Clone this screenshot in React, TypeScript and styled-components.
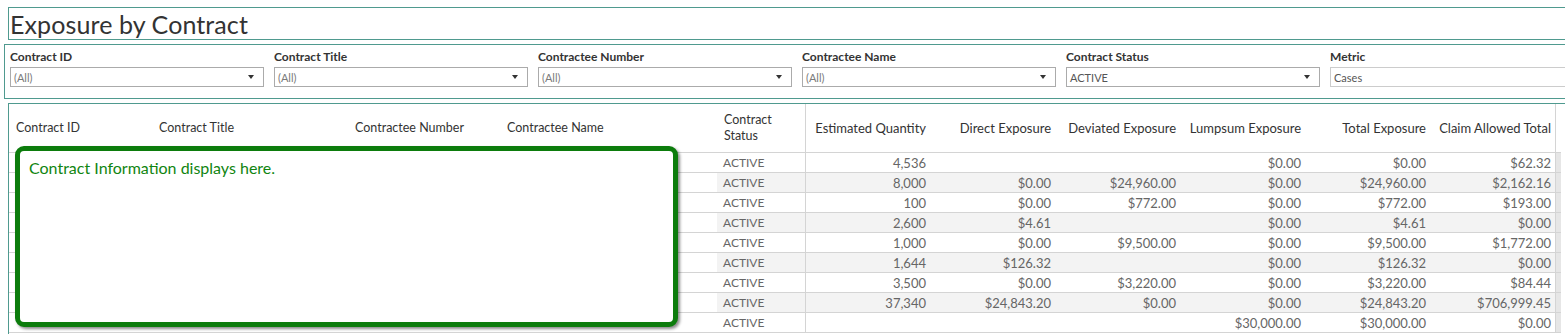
import React from "react";
import styled, { createGlobalStyle } from "styled-components";

const GlobalStyle = createGlobalStyle`
  html, body {
    margin: 0;
    padding: 0;
    background: #ffffff;
    overflow: hidden;
  }
  body {
    font-family: Lato, "Open Sans", "Liberation Sans", sans-serif;
    color: #333333;
  }
`;

const teal = "#4f9a8f";

const Page = styled.div`
  display: flex;
  flex-direction: column;
  width: 1600px;
  height: 334px;
  padding-top: 7px;
  box-sizing: border-box;
`;

const TitleBox = styled.div`
  margin-left: 8px;
  height: 33px;
  box-sizing: border-box;
  border: 1px solid ${teal};
  display: flex;
  align-items: center;
  padding-left: 1px;
`;

const Title = styled.h1`
  margin: 0;
  font-family: Lato, "Open Sans", sans-serif;
  font-weight: 400;
  font-size: 25px;
  color: #333333;
  letter-spacing: 0.1px;
`;

const FilterBox = styled.div`
  margin-top: 4px;
  margin-left: 4px;
  height: 55px;
  box-sizing: border-box;
  border: 1px solid ${teal};
  display: grid;
  grid-template-columns: repeat(5, 264px) 1fr;
  padding: 4px 0 0 5px;
`;

const Filter = styled.div`
  display: flex;
  flex-direction: column;
  gap: 3px;
`;

const FilterLabel = styled.label`
  font-size: 12px;
  font-weight: 700;
  color: #333333;
  line-height: 15px;
`;

const Select = styled.div<{ $open?: boolean; $plain?: boolean }>`
  height: 20px;
  box-sizing: border-box;
  width: ${(p) => (p.$plain ? "400px" : "254px")};
  border: 1px solid ${(p) => (p.$plain ? "#cccccc" : "#ababab")};
  display: flex;
  align-items: center;
  justify-content: space-between;
  padding: 0 9px 0 3px;
  font-size: 11px;
  color: ${(p) => (p.$open ? "#7a7a7a" : "#555555")};
`;

const Arrow = styled.span`
  width: 0;
  height: 0;
  border-left: 3.5px solid transparent;
  border-right: 3.5px solid transparent;
  border-top: 4px solid #333333;
`;

const TableBox = styled.div`
  position: relative;
  margin-top: 4px;
  margin-left: 8px;
  flex: 1;
  border-top: 1px solid ${teal};
  border-left: 1px solid ${teal};
  overflow: hidden;
`;

const columns = "143px 196px 152px 217px 88px repeat(6, 125px) 6px";

const HeaderRow = styled.div`
  display: grid;
  grid-template-columns: ${columns};
  height: 48px;
  border-bottom: 1px solid #d4d4d4;
  width: 1552px;
`;

const HeadCell = styled.div<{ $right?: boolean; $divider?: boolean }>`
  display: flex;
  align-items: center;
  justify-content: ${(p) => (p.$right ? "flex-end" : "flex-start")};
  padding: ${(p) => (p.$right ? "0 4px 0 0" : "0 0 0 7px")};
  font-size: ${(p) => (p.$right ? "13px" : "12.5px")};
  line-height: 16px;
  color: #333333;
  border-left: ${(p) => (p.$divider ? "1px solid #d4d4d4" : "none")};
  white-space: nowrap;
`;

const ScrollEdge = styled.div<{ $track?: boolean }>`
  border-left: 1px solid #d4d4d4;
  background: ${(p) => (p.$track ? "#e6e6e6" : "transparent")};
`;

const Row = styled.div`
  display: grid;
  grid-template-columns: 708px 88px repeat(6, 125px) 6px;
  height: 20px;
  box-sizing: border-box;
  border-bottom: 1px solid #d4d4d4;
  width: 1552px;
`;

const Blank = styled.div``;

const Cell = styled.div<{ $alt?: boolean; $right?: boolean; $divider?: boolean }>`
  background: ${(p) => (p.$alt ? "#f3f3f3" : "#ffffff")};
  font-size: ${(p) => (p.$right ? "13px" : "12px")};
  color: #666666;
  display: flex;
  align-items: center;
  justify-content: ${(p) => (p.$right ? "flex-end" : "flex-start")};
  padding: ${(p) => (p.$right ? "0 4px 0 0" : "0 0 0 6px")};
  border-left: ${(p) => (p.$divider ? "1px solid #d4d4d4" : "none")};
  white-space: nowrap;
`;

const InfoCard = styled.div`
  position: absolute;
  left: 6px;
  top: 42px;
  width: 663px;
  height: 181px;
  box-sizing: border-box;
  border: 5px solid #0c7c0c;
  border-radius: 9px;
  background: #ffffff;
  box-shadow: 2px 2px 3px rgba(0, 0, 0, 0.45);
  padding: 7px 0 0 9px;
  font-size: 16px;
  color: #108510;
`;

const filters = [
  { label: "Contract ID", value: "(All)" },
  { label: "Contract Title", value: "(All)" },
  { label: "Contractee Number", value: "(All)" },
  { label: "Contractee Name", value: "(All)" },
  { label: "Contract Status", value: "ACTIVE" },
];

const measures = [
  "Estimated Quantity",
  "Direct Exposure",
  "Deviated Exposure",
  "Lumpsum Exposure",
  "Total Exposure",
  "Claim Allowed Total",
];

const rows: string[][] = [
  ["4,536", "", "", "$0.00", "$0.00", "$62.32"],
  ["8,000", "$0.00", "$24,960.00", "$0.00", "$24,960.00", "$2,162.16"],
  ["100", "$0.00", "$772.00", "$0.00", "$772.00", "$193.00"],
  ["2,600", "$4.61", "", "$0.00", "$4.61", "$0.00"],
  ["1,000", "$0.00", "$9,500.00", "$0.00", "$9,500.00", "$1,772.00"],
  ["1,644", "$126.32", "", "$0.00", "$126.32", "$0.00"],
  ["3,500", "$0.00", "$3,220.00", "$0.00", "$3,220.00", "$84.44"],
  ["37,340", "$24,843.20", "$0.00", "$0.00", "$24,843.20", "$706,999.45"],
  ["", "", "", "$30,000.00", "$30,000.00", "$0.00"],
];

const App: React.FC = () => {
  return (
    <>
      <GlobalStyle />
      <Page>
        <TitleBox>
          <Title>Exposure by Contract</Title>
        </TitleBox>
        <FilterBox>
          {filters.map((f) => (
            <Filter key={f.label}>
              <FilterLabel>{f.label}</FilterLabel>
              <Select $open={f.value === "(All)"}>
                <span>{f.value}</span>
                <Arrow />
              </Select>
            </Filter>
          ))}
          <Filter>
            <FilterLabel>Metric</FilterLabel>
            <Select $plain>
              <span>Cases</span>
            </Select>
          </Filter>
        </FilterBox>
        <TableBox>
          <HeaderRow>
            <HeadCell>Contract ID</HeadCell>
            <HeadCell>Contract Title</HeadCell>
            <HeadCell>Contractee Number</HeadCell>
            <HeadCell>Contractee Name</HeadCell>
            <HeadCell style={{ whiteSpace: "normal" }}>
              Contract
              <br />
              Status
            </HeadCell>
            {measures.map((m, i) => (
              <HeadCell key={m} $right $divider={i === 0}>
                {m}
              </HeadCell>
            ))}
            <ScrollEdge />
          </HeaderRow>
          {rows.map((r, ri) => {
            const alt = ri % 2 === 1;
            return (
              <Row key={ri}>
                <Blank />
                <Cell $alt={alt}>ACTIVE</Cell>
                {r.map((v, ci) => (
                  <Cell key={ci} $alt={alt} $right $divider={ci === 0}>
                    {v}
                  </Cell>
                ))}
                <ScrollEdge $track />
              </Row>
            );
          })}
          <InfoCard>Contract Information displays here.</InfoCard>
        </TableBox>
      </Page>
    </>
  );
};

export default App;
